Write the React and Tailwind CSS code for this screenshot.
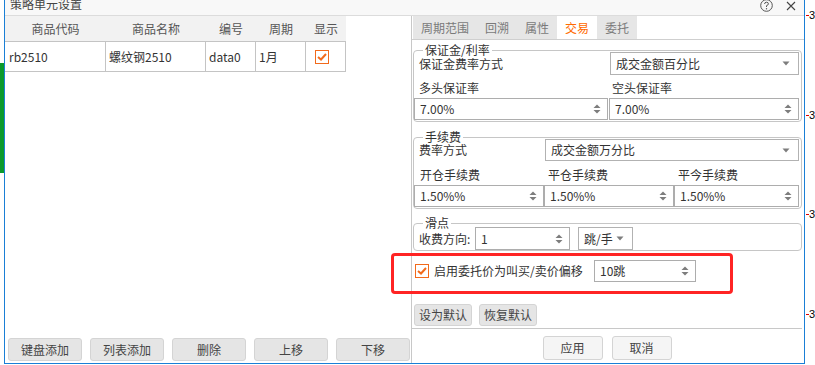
import React from "react";

const SpinArrows = () => (
  <svg width="8" height="12" viewBox="0 0 8 12" className="shrink-0">
    <path d="M4 1.5 L7.5 5 L0.5 5 Z" fill="#7d7d7d" />
    <path d="M4 10.5 L7.5 7 L0.5 7 Z" fill="#7d7d7d" />
  </svg>
);

const Caret = () => (
  <svg width="8" height="5" viewBox="0 0 8 5" className="shrink-0">
    <path d="M0.5 0.5 L7.5 0.5 L4 4.5 Z" fill="#7d7d7d" />
  </svg>
);

const CheckBox = () => (
  <div className="flex h-[14px] w-[14px] shrink-0 items-center justify-center border border-[#f26a1b] bg-white">
    <svg width="10" height="8" viewBox="0 0 10 8">
      <path d="M1 4 L4 6.5 L9 1" fill="none" stroke="#f26a1b" strokeWidth="2" />
    </svg>
  </div>
);

const Spin = ({ value, className = "" }) => (
  <div className={`flex h-[22px] items-center border border-[#adadad] bg-white pl-[5px] pr-[6px] ${className}`}>
    <span className="flex-1">{value}</span>
    <SpinArrows />
  </div>
);

const Select = ({ value, className = "" }) => (
  <div className={`flex items-center border border-[#b2b2b2] bg-white pl-[5px] pr-[8px] ${className}`}>
    <span className="flex-1">{value}</span>
    <Caret />
  </div>
);

// group box with the title sitting on the top border
const Group = ({ title, className = "", children }) => (
  <div className={`ml-[1px] mr-[2px] flex flex-col rounded-[4px] border border-[#c6c6c6] ${className}`}>
    <div className="-mb-[5px] -mt-[7px] ml-[9px] h-[12px] self-start bg-white px-[2px] leading-[12px]">
      {title}
    </div>
    {children}
  </div>
);

const GrayButton = ({ children, className = "" }) => (
  <button className={`flex items-center justify-center rounded-[3px] border border-[#d4d4d4] bg-[#e5e5e5] text-[#444] ${className}`}>
    {children}
  </button>
);

const tabs = [
  { name: "周期范围" },
  { name: "回溯" },
  { name: "属性" },
  { name: "交易", active: true },
  { name: "委托" },
];

const cols = [
  { title: "商品代码", w: "w-[101px]", value: "rb2510", pad: "pl-[4px]" },
  { title: "商品名称", w: "w-[100px]", value: "螺纹钢2510", pad: "pl-[3px]" },
  { title: "编号", w: "w-[50px]", value: "data0", pad: "pl-[3px]" },
  { title: "周期", w: "w-[50px]", value: "1月", pad: "pl-[3px]" },
];

export default function App() {
  return (
    <div className="flex h-[365px] w-[815px] overflow-hidden bg-white font-['Noto_Sans_CJK_SC',sans-serif] text-[12px] leading-[16px] text-[#333]">
      {/* green strip on the far left */}
      <div className="w-[4px] shrink-0">
        <div className="mt-[63px] h-[110px] bg-[#0b9a2c]" />
      </div>

      {/* dialog */}
      <div className="flex h-[364px] w-[801px] shrink-0 flex-col border-x border-b border-[#1a7fd6]">
        {/* title bar */}
        <div className="flex h-[16px] shrink-0 items-start border-b border-[#dcdcdc] bg-[#f8f8f8]">
          <span className="-mt-[4px] ml-[5px] text-[#444]">策略单元设置</span>
          <div className="ml-auto mr-[8px] flex items-center gap-[13px] -mt-[1px]">
            <svg width="13" height="13" viewBox="0 0 13 13">
              <circle cx="6.5" cy="6.5" r="5.8" fill="none" stroke="#555" strokeWidth="1" />
              <path d="M4.6 5 Q4.6 3.2 6.5 3.2 Q8.4 3.2 8.4 4.9 Q8.4 6 6.5 6.7 L6.5 8" fill="none" stroke="#555" strokeWidth="1" />
              <circle cx="6.5" cy="9.8" r="0.7" fill="#555" />
            </svg>
            <svg width="10" height="10" viewBox="0 0 10 10">
              <path d="M1 1 L9 9 M9 1 L1 9" stroke="#444" strokeWidth="1.1" />
            </svg>
          </div>
        </div>

        <div className="flex flex-1">
          {/* left panel */}
          <div className="flex w-[406px] shrink-0 flex-col">
            <div className="flex h-[26px] w-[341px] border-b border-[#c4c4c4] bg-[#f2f2f2] text-[#555]">
              {cols.map((c) => (
                <div key={c.title} className={`${c.w} flex items-center justify-center`}>
                  {c.title}
                </div>
              ))}
              <div className="flex w-[40px] items-center justify-center">显示</div>
            </div>
            <div className="flex h-[30px] w-[341px] border-b border-[#c4c4c4]">
              {cols.map((c) => (
                <div key={c.title} className={`${c.w} flex items-center border-r border-[#c4c4c4] ${c.pad}`}>
                  {c.value}
                </div>
              ))}
              <div className="flex w-[40px] items-center border-r border-[#c4c4c4] pl-[9px]">
                <CheckBox />
              </div>
            </div>
            <div className="flex-1" />
            <div className="mb-[2px] flex h-[23px] gap-[8px] pl-[3px] pr-[1px]">
              <GrayButton className="flex-1">键盘添加</GrayButton>
              <GrayButton className="flex-1">列表添加</GrayButton>
              <GrayButton className="flex-1">删除</GrayButton>
              <GrayButton className="flex-1">上移</GrayButton>
              <GrayButton className="flex-1">下移</GrayButton>
            </div>
          </div>

          {/* right panel */}
          <div className="relative flex flex-1 flex-col border-l border-[#c8c8c8]">
            <div className="flex h-[24px] border-b border-[#cfcfcf] pl-[1px]">
              {tabs.map((t) => (
                <div
                  key={t.name}
                  className={`flex items-center px-[8px] ${t.active ? "bg-white text-[#ff6a00]" : "bg-[#e6e6e6] text-[#7a7a7a]"}`}
                >
                  {t.name}
                </div>
              ))}
            </div>

            <Group title="保证金/利率" className="mt-[10px]">
              <div className="mt-[1px] flex h-[23px] items-center">
                <span className="pl-[5px] leading-[14px]">保证金费率方式</span>
                <Select value="成交金额百分比" className="ml-auto mr-[2px] h-[23px] w-[189px]" />
              </div>
              <div className="mb-[2px] mt-[5px] grid grid-cols-[194px_1fr]">
                <span className="pl-[5px]">多头保证率</span>
                <span className="pl-[4px]">空头保证率</span>
              </div>
              <div className="mb-[1px] grid grid-cols-[194px_1fr]">
                <Spin value="7.00%" />
                <Spin value="7.00%" className="ml-[1px] mr-[2px]" />
              </div>
            </Group>

            <Group title="手续费" className="mt-[15px]">
              <div className="mt-[1px] flex h-[22px] items-center">
                <span className="pl-[5px] leading-[14px]">费率方式</span>
                <Select value="成交金额万分比" className="ml-auto mr-[2px] h-[22px] w-[254px]" />
              </div>
              <div className="mb-[2px] mt-[6px] grid grid-cols-[130px_130px_1fr]">
                <span className="pl-[6px]">开仓手续费</span>
                <span className="pl-[4px]">平仓手续费</span>
                <span className="pl-[4px]">平今手续费</span>
              </div>
              <div className="mb-[1px] grid grid-cols-[130px_130px_1fr]">
                <Spin value="1.50%%" />
                <Spin value="1.50%%" />
                <Spin value="1.50%%" className="mr-[2px]" />
              </div>
            </Group>

            <Group title="滑点" className="mt-[14px]">
              <div className="mt-[3px] flex h-[23px] items-center">
                <span className="w-[61px] shrink-0 pl-[5px] leading-[14px]">收费方向:</span>
                <Spin value="1" className="h-[23px] w-[95px]" />
                <Select value="跳/手" className="ml-[8px] h-[23px] w-[55px]" />
              </div>
            </Group>

            <div className="mt-[9px] flex h-[22px] items-center pl-[3px]">
              <CheckBox />
              <span className="ml-[5px] w-[160px] shrink-0">启用委托价为叫买/卖价偏移</span>
              <Spin value="10跳" className="w-[102px]" />
            </div>

            <div className="ml-[2px] mt-[22px] flex h-[22px] gap-[7px]">
              <GrayButton className="w-[58px]">设为默认</GrayButton>
              <GrayButton className="w-[58px]">恢复默认</GrayButton>
            </div>

            <div className="mr-[2px] mt-[2px] flex flex-1 justify-center gap-[9px] border-t border-[#c8c8c8] pt-[7px]">
              <GrayButton className="h-[24px] w-[60px] bg-[#f5f5f5]">应用</GrayButton>
              <GrayButton className="h-[24px] w-[60px] bg-[#f5f5f5]">取消</GrayButton>
            </div>

            {/* red highlight drawn over the dialog */}
            <div className="pointer-events-none absolute left-[-21px] top-[237px] h-[41px] w-[342px] rounded-[4px] border-[3px] border-[#ff2424]" />
          </div>
        </div>
      </div>

      {/* ruler on the right */}
      <div className="flex w-[10px] shrink-0">
        <div className="ml-[1px] w-[1px] bg-[#e00000]" />
        <div className="flex flex-col text-[11px] leading-[12px] text-black font-['Liberation_Sans',sans-serif]">
          {[9, 88, 87, 88].map((m, i) => (
            <div key={i} className="flex items-center" style={{ marginTop: m }}>
              <div className="h-[1px] w-[3px] bg-[#e00000]" />
              <span>3</span>
            </div>
          ))}
        </div>
      </div>
    </div>
  );
}
